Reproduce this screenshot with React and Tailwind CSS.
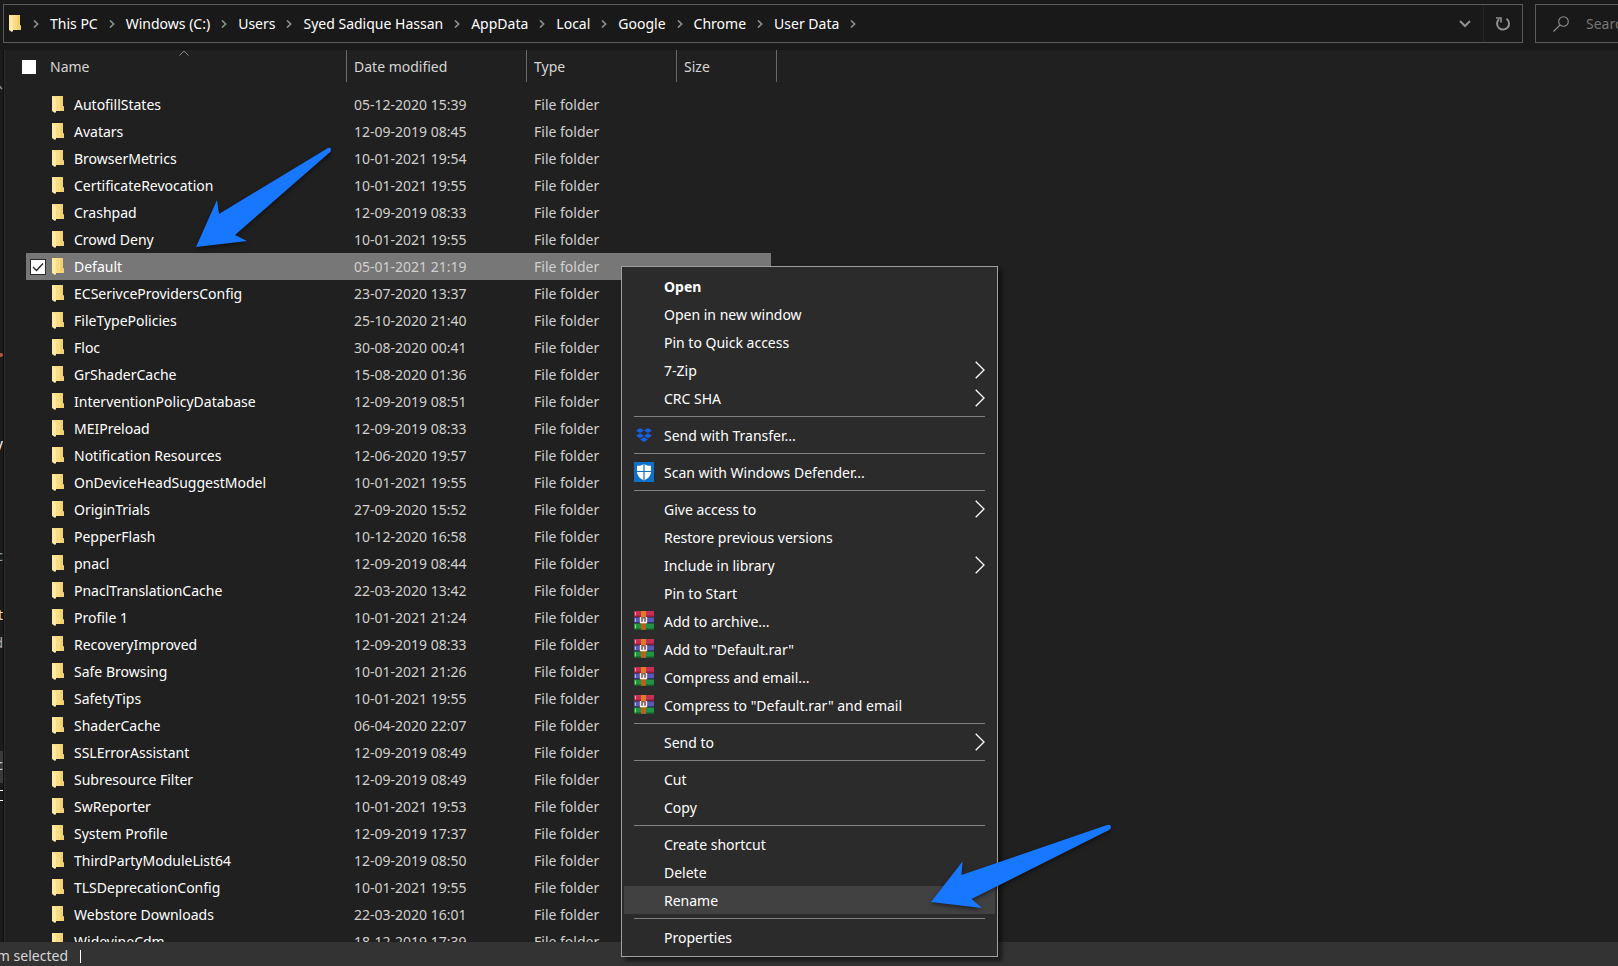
import { Fragment } from "react";

const crumbs = ["This PC", "Windows (C:)", "Users", "Syed Sadique Hassan", "AppData", "Local", "Google", "Chrome", "User Data"];

const files = [
  ["AutofillStates", "05-12-2020 15:39"],
  ["Avatars", "12-09-2019 08:45"],
  ["BrowserMetrics", "10-01-2021 19:54"],
  ["CertificateRevocation", "10-01-2021 19:55"],
  ["Crashpad", "12-09-2019 08:33"],
  ["Crowd Deny", "10-01-2021 19:55"],
  ["Default", "05-01-2021 21:19"],
  ["ECSerivceProvidersConfig", "23-07-2020 13:37"],
  ["FileTypePolicies", "25-10-2020 21:40"],
  ["Floc", "30-08-2020 00:41"],
  ["GrShaderCache", "15-08-2020 01:36"],
  ["InterventionPolicyDatabase", "12-09-2019 08:51"],
  ["MEIPreload", "12-09-2019 08:33"],
  ["Notification Resources", "12-06-2020 19:57"],
  ["OnDeviceHeadSuggestModel", "10-01-2021 19:55"],
  ["OriginTrials", "27-09-2020 15:52"],
  ["PepperFlash", "10-12-2020 16:58"],
  ["pnacl", "12-09-2019 08:44"],
  ["PnaclTranslationCache", "22-03-2020 13:42"],
  ["Profile 1", "10-01-2021 21:24"],
  ["RecoveryImproved", "12-09-2019 08:33"],
  ["Safe Browsing", "10-01-2021 21:26"],
  ["SafetyTips", "10-01-2021 19:55"],
  ["ShaderCache", "06-04-2020 22:07"],
  ["SSLErrorAssistant", "12-09-2019 08:49"],
  ["Subresource Filter", "12-09-2019 08:49"],
  ["SwReporter", "10-01-2021 19:53"],
  ["System Profile", "12-09-2019 17:37"],
  ["ThirdPartyModuleList64", "12-09-2019 08:50"],
  ["TLSDeprecationConfig", "10-01-2021 19:55"],
  ["Webstore Downloads", "22-03-2020 16:01"],
  ["WidevineCdm", "18-12-2019 17:39"],
];

const menuGroups = [
  [
    { label: "Open", bold: true },
    { label: "Open in new window" },
    { label: "Pin to Quick access" },
    { label: "7-Zip", sub: true },
    { label: "CRC SHA", sub: true },
  ],
  [{ label: "Send with Transfer...", icon: DropboxIcon }],
  [{ label: "Scan with Windows Defender...", icon: DefenderIcon }],
  [
    { label: "Give access to", sub: true },
    { label: "Restore previous versions" },
    { label: "Include in library", sub: true },
    { label: "Pin to Start" },
    { label: "Add to archive...", icon: RarIcon },
    { label: 'Add to "Default.rar"', icon: RarIcon },
    { label: "Compress and email...", icon: RarIcon },
    { label: 'Compress to "Default.rar" and email', icon: RarIcon },
  ],
  [{ label: "Send to", sub: true }],
  [{ label: "Cut" }, { label: "Copy" }],
  [{ label: "Create shortcut" }, { label: "Delete" }, { label: "Rename", active: true }],
  [{ label: "Properties" }],
];

function FolderIcon() {
  return (
    <svg width="12" height="17" viewBox="0 0 12 17" className="shrink-0" aria-hidden="true">
      <path d="M0 0H11V10L12 11V15H0Z" fill="#f9dc84" />
      <path d="M8 0H11V10L12 11V15H8Z" fill="#f3d072" />
      <path d="M0 0L4 2V16L3 17L0 15Z" fill="#fdeaa6" />
    </svg>
  );
}

function CrumbChevron() {
  return (
    <svg width="6" height="8" viewBox="0 0 6 8" fill="none" stroke="#8c8c8c" strokeWidth="1.7" className="shrink-0" aria-hidden="true">
      <path d="M1 0.5L4.6 4L1 7.5" />
    </svg>
  );
}

function DropboxIcon() {
  return (
    <svg width="20" height="20" viewBox="0 0 20 20" fill="#1560e0" aria-hidden="true">
      <path d="M6 3L10 5.5L6 8L2 5.5ZM14 3L18 5.5L14 8L10 5.5ZM6 8.2L10 10.7L6 13.2L2 10.7ZM14 8.2L18 10.7L14 13.2L10 10.7ZM10 11.9L14 14.4L10 17L6 14.4Z" />
    </svg>
  );
}

function DefenderIcon() {
  return (
    <svg width="20" height="20" viewBox="0 0 20 20" aria-hidden="true">
      <path d="M0 0H20V20H0Z" fill="#0f70c8" />
      <path d="M10 2C12 3.3 14.5 3.8 17 3.8V9.5C17 14 13.5 17 10 18.5C6.5 17 3 14 3 9.5V3.8C5.5 3.8 8 3.3 10 2Z" fill="#fff" />
      <path d="M10 2V18.5M3 9.5H17" stroke="#0f70c8" strokeWidth="1.2" />
    </svg>
  );
}

function RarIcon() {
  return (
    <svg width="20" height="20" viewBox="0 0 20 20" aria-hidden="true">
      <path d="M0 0H20V6H0Z" fill="#c52f55" />
      <path d="M0 4.5H20V6H0Z" fill="#8f1c3c" />
      <path d="M0 6.5H20V12H0Z" fill="#5b57b5" />
      <path d="M0 11H20V12H0Z" fill="#333374" />
      <path d="M0 12.5H20V18.5H0Z" fill="#1f9444" />
      <path d="M0 17.5H20V18.5H0Z" fill="#115c2b" />
      <path d="M1.5 1V4.5" stroke="#f2a0a8" />
      <path d="M1.5 7.5V11" stroke="#b9b4ee" />
      <path d="M1.5 13.5V17.5" stroke="#a9e04a" />
      <path d="M7 0H12V18.5H7Z" fill="#e07a26" />
      <path d="M7 12.5H12V18.5H7Z" fill="#b8601c" />
      <path d="M6 6H13V12H6Z" fill="#7d6660" />
      <path d="M6.5 6V11.5H12.5V6M9.5 7.5V11.5" stroke="#f4efe8" strokeWidth="1.3" fill="none" />
    </svg>
  );
}

function AddressBar() {
  return (
    <header className="flex h-[50px] shrink-0 gap-3 overflow-hidden bg-[#191919] pt-1 pl-[3px]">
      <nav aria-label="Address" className="flex h-[39px] min-w-0 flex-1 items-center border border-[#5a5a5a] pl-[5px]">
        <FolderIcon />
        <ol className="ml-3 flex flex-1 items-center gap-[11px] whitespace-nowrap text-white">
          <li aria-hidden="true"><CrumbChevron /></li>
          {crumbs.map((c) => (
            <Fragment key={c}>
              <li><a href="#" className="block">{c}</a></li>
              <li aria-hidden="true"><CrumbChevron /></li>
            </Fragment>
          ))}
        </ol>
        <button type="button" aria-label="Previous locations" className="flex h-full w-9 items-center justify-center border-r border-[#262626]">
          <svg width="12" height="8" viewBox="0 0 12 8" fill="none" stroke="#8f8f8f" strokeWidth="2" className="mr-[2px]">
            <path d="M1 1L6 6L11 1" />
          </svg>
        </button>
        <button type="button" aria-label="Refresh" className="flex h-full w-[38px] items-center justify-center">
          <svg width="16" height="16" viewBox="0 0 16 16" fill="none" stroke="#8f8f8f" strokeWidth="2">
            <path d="M11.5 2.7A6 6 0 1 1 4 3.2" />
            <path d="M1 2H6V6.5" strokeWidth="1.6" />
          </svg>
        </button>
      </nav>
      <label className="flex h-[39px] w-[83px] shrink-0 items-center gap-[17px] overflow-hidden border border-r-0 border-[#5a5a5a] pl-[17px]">
        <svg width="16" height="16" viewBox="0 0 16 16" fill="none" stroke="#8f8f8f" strokeWidth="1.1" className="shrink-0">
          <circle cx="10.5" cy="5.5" r="4.8" />
          <path d="M7 9L0.5 15.5" />
        </svg>
        <input type="search" aria-label="Search User Data" placeholder="Search User Data" className="w-[130px] shrink-0 bg-transparent outline-none placeholder:text-[#777]" />
      </label>
    </header>
  );
}

function NavigationEdge() {
  return (
    <aside className="flex w-1 shrink-0 flex-col items-end overflow-hidden border-r border-[#0e0e0e] bg-[#1b1b1b] leading-7 text-[#cfcfcf]">
      <svg width="10" height="7" viewBox="0 0 10 7" fill="none" stroke="#8c8c8c" strokeWidth="1.5" className="mt-[33px] shrink-0" aria-hidden="true">
        <path d="M1 6L5 1.5L9 6" />
      </svg>
      <span className="mt-[263px] size-1 shrink-0 rounded-full bg-[#b5583a]" />
      <span className="mt-[73px] h-28 shrink-0 text-white">y</span>
      <span className="h-[59px] shrink-0 text-[#7fa6c4]">c</span>
      <span className="h-7 shrink-0 text-[#f3dcc0]">t</span>
      <span className="h-[122px] shrink-0 text-[#b0b0b0]">d</span>
      <span className="flex h-8 w-full shrink-0 justify-end bg-[#3a3a3a]">c</span>
      <span className="mt-[7px] h-px w-full shrink-0 bg-white" />
      <span className="mt-[9px] h-px w-full shrink-0 bg-white" />
    </aside>
  );
}

function FileTable() {
  return (
    <table className="w-[751px] table-fixed border-collapse text-left whitespace-nowrap">
      <colgroup>
        <col className="w-[321px]" />
        <col className="w-[180px]" />
        <col className="w-[150px]" />
        <col className="w-[100px]" />
      </colgroup>
      <thead className="text-[#d6d6d6]">
        <tr>
          <th className="h-[41px] p-0 align-top font-normal">
            <div className="relative flex h-8 items-center border-r border-[#6a6a6a] pt-[2px]">
              <input type="checkbox" aria-label="Select all" className="-ml-1 size-[14px] appearance-none bg-white" />
              <span className="ml-[14px]">Name</span>
              <svg width="10" height="6" viewBox="0 0 10 6" fill="none" stroke="#8c8c8c" className="absolute top-0 left-[153px]" aria-hidden="true">
                <path d="M0.5 5.5L5 1L9.5 5.5" />
              </svg>
            </div>
          </th>
          {["Date modified", "Type", "Size"].map((h) => (
            <th key={h} className="h-[41px] p-0 align-top font-normal">
              <div className="flex h-8 items-center border-r border-[#6a6a6a] pt-[2px] pl-[7px]">{h}</div>
            </th>
          ))}
        </tr>
      </thead>
      <tbody>
        {files.map(([name, date]) => {
          const selected = name === "Default";
          const fill = selected ? "bg-[#777]" : "";
          return (
            <tr key={name} className="h-[27px] text-[#d0d0d0]">
              <td className={"p-0 " + fill}>
                <div className="flex items-center">
                  <span className="flex w-[26px] shrink-0 pl-1">
                    {selected && (
                      <label className="relative block size-4">
                        <input type="checkbox" defaultChecked aria-label="Select Default" className="block size-4 appearance-none border border-[#2a2a2a] bg-white" />
                        <svg width="16" height="16" viewBox="0 0 16 16" fill="none" stroke="#222" strokeWidth="1.3" className="absolute inset-0">
                          <path d="M3 8L6.5 11.5L13 4.5" />
                        </svg>
                      </label>
                    )}
                  </span>
                  <FolderIcon />
                  <span className="ml-[10px] text-white">{name}</span>
                </div>
              </td>
              <td className={"py-0 pr-0 pl-[7px] " + fill}>{date}</td>
              <td className={"py-0 pr-0 pl-[7px] " + fill}>File folder</td>
              <td className={"py-0 pr-[6px] pl-0 bg-clip-content " + fill}>
                <div className="h-[27px]" />
              </td>
            </tr>
          );
        })}
      </tbody>
    </table>
  );
}

function ContextMenu() {
  return (
    <div role="menu" className="absolute top-[266px] left-[621px] w-[377px] border border-[#a0a0a0] bg-[#2b2b2b] px-[2px] py-[5px] text-white shadow-[4px_4px_4px_rgba(0,0,0,0.5)]">
      {menuGroups.map((group, i) => (
        <Fragment key={i}>
          {i > 0 && <hr className="mx-[10px] my-1 border-[#808080]" />}
          {group.map(({ label, bold, sub, icon: Icon, active }) => (
            <button
              key={label}
              type="button"
              role="menuitem"
              className={"flex h-7 w-full items-center px-[10px] text-left " + (active ? "bg-[#414141] " : "") + (bold ? "font-bold" : "")}
            >
              <span className="w-[30px] shrink-0">{Icon && <Icon />}</span>
              <span className="flex-1 pt-[2px]">{label}</span>
              {sub && (
                <svg width="10" height="18" viewBox="0 0 10 18" fill="none" stroke="#fff" strokeWidth="1.3" aria-hidden="true">
                  <path d="M0.7 0.7L9 9L0.7 17.3" />
                </svg>
              )}
            </button>
          ))}
        </Fragment>
      ))}
    </div>
  );
}

function Arrows() {
  return (
    <svg width="1120" height="930" viewBox="0 0 1120 930" fill="#1877ff" className="pointer-events-none absolute top-0 left-0 drop-shadow-[0_2px_2px_rgba(0,0,0,0.5)]" aria-hidden="true">
      <path d="M196 247L217 200L219 214L328 148Q331 147 331 150Q331 152 329 153L235 235L247 241Z" />
      <path d="M931 902L962.5 861.5L961.5 875L1107 825Q1111 824 1111 827Q1111 829 1109 830L971.5 899L982 908Z" />
    </svg>
  );
}

export default function App() {
  return (
    <div className="relative flex h-screen flex-col overflow-hidden bg-[#202020] font-['Noto_Sans','Open_Sans',sans-serif] text-sm leading-5">
      <AddressBar />
      <div className="flex min-h-0 flex-1">
        <NavigationEdge />
        <main className="min-w-0 flex-1 overflow-hidden border-l border-[#2c2c2c] pl-[21px]">
          <FileTable />
        </main>
      </div>
      <footer className="flex h-6 shrink-0 items-end gap-3 bg-[#333] whitespace-nowrap text-[#d6d6d6]">
        <span className="flex w-[68px] justify-end overflow-hidden">1 item selected</span>
        <span className="mb-[3px] h-[13px] w-px bg-white" />
      </footer>
      <ContextMenu />
      <Arrows />
    </div>
  );
}
